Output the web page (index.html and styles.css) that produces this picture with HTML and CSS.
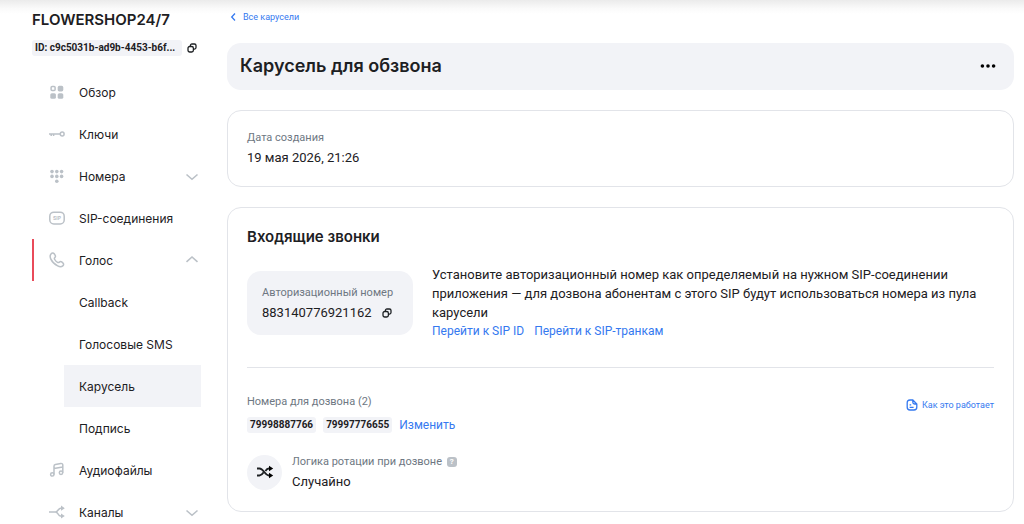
FILE: index.html
```html
<!DOCTYPE html>
<html lang="ru">
<head>
    <meta charset="UTF-8">
    <meta name="viewport" content="width=device-width, initial-scale=1.0">
    <title>Карусель для обзвона</title>
    <link rel="stylesheet" href="styles.css">
</head>
<body>
    <div class="top-shadow"></div>

    <div class="layout">
        <aside class="sidebar">
            <div class="project-name">FLOWERSHOP24/7</div>
            <div class="project-id">
                <span class="tag">ID: c9c5031b-ad9b-4453-b6f...</span>
                <button class="copy" type="button" aria-label="Копировать ID">
                    <svg width="10" height="10" viewBox="0 0 10 10"><path d="M3.4 3.2V2.6C3.4 1.500 4 1 5 1h2.400C8.500 1 9 1.600 9 2.600v2C9 5.600 8.500 6.100 7.500 6.100H6.700"/><rect x="1" y="3.5" width="5.4" height="5.5" rx="1.7"/></svg>
                </button>
            </div>

            <nav class="menu">
                <a class="item" href="#">
                    <svg class="icon" viewBox="0 0 16 16"><rect class="line" x="2.1" y="2.6" width="4" height="4" rx="1"/><rect class="fill" x="8.7" y="1.8" width="5.6" height="5.6" rx="1.6"/><rect class="fill" x="1.3" y="9.2" width="5.6" height="5.6" rx="1.6"/><rect class="fill" x="8.7" y="9.2" width="5.6" height="5.6" rx="1.6"/></svg>
                    <span>Обзор</span>
                </a>
                <a class="item" href="#">
                    <svg class="icon" viewBox="0 0 16 16"><path class="line" d="M0 8h11.500M2.200 8v2M4.600 8v2"/><ellipse class="line" cx="13.200" cy="8" rx="1.900" ry="2"/></svg>
                    <span>Ключи</span>
                </a>
                <a class="item" href="#">
                    <svg class="icon" viewBox="0 0 16 16"><g class="fill"><circle cx="3" cy="3.6" r="1.8"/><circle cx="7.8" cy="3.6" r="1.8"/><circle cx="12.6" cy="3.6" r="1.8"/><circle cx="3" cy="8.4" r="1.8"/><circle cx="7.8" cy="8.4" r="1.8"/><circle cx="12.6" cy="8.4" r="1.8"/><circle cx="7.8" cy="13.2" r="1.8"/></g></svg>
                    <span>Номера</span>
                    <svg class="chevron" viewBox="0 0 14 14"><path d="M1.500 5.500l5.500 4.800 5.500-4.800"/></svg>
                </a>
                <a class="item" href="#">
                    <svg class="icon" viewBox="0 0 16 16"><rect class="line" x=".8" y="2.2" width="14.4" height="11.8" rx="4"/><text class="icon-text" x="8" y="10">SIP</text></svg>
                    <span>SIP-соединения</span>
                </a>
                <a class="item open" href="#">
                    <svg class="icon" viewBox="0 0 16 16"><path class="line" d="M2 1.9C3 .8 4.400.7 5.200 1.800l1 1.500c.6 1 .2 1.800-.5 2.500-.5.5-.4 1 0 1.700.7 1.300 1.500 2.100 2.800 2.800.7.4 1.300.3 1.900-.2.7-.6 1.500-.8 2.300-.2l1.100.9c1.100.9 1.100 2.200 0 3.100-1.400 1.200-3.300 1-5.100 0C5.600 12.400 3.100 9.900 1.700 6.900 1 5.100.8 3.300 2 1.900z"/></svg>
                    <span>Голос</span>
                    <svg class="chevron" viewBox="0 0 14 14"><path d="M1.500 8.800L7 4l5.500 4.800"/></svg>
                </a>
                <a class="item sub" href="#">Callback</a>
                <a class="item sub" href="#">Голосовые SMS</a>
                <a class="item sub active" href="#">Карусель</a>
                <a class="item sub" href="#">Подпись</a>
                <a class="item" href="#">
                    <svg class="icon" viewBox="0 0 16 16"><circle class="line" cx="3.300" cy="12.400" r="1.700"/><circle class="line" cx="12" cy="10.800" r="1.700"/><path class="line" d="M5 12.400V4.200c0-1 .5-1.600 1.400-1.800l5.400-.9c1.200-.2 2 .4 2 1.500v7.800M5 6.400l8.700-1.500"/></svg>
                    <span>Аудиофайлы</span>
                </a>
                <a class="item" href="#">
                    <svg class="icon" viewBox="0 0 16 16"><path class="line" d="M0 8h7M13 4.200h-1.400C9.300 4.200 9 8 6.500 8c2.500 0 2.800 4 4.900 4H13"/><path class="fill" d="M12 1.600L15.800 4.200 12 6.800zM12 9.400l3.800 2.600-3.800 2.600z"/></svg>
                    <span>Каналы</span>
                    <svg class="chevron" viewBox="0 0 14 14"><path d="M1.500 5.500l5.500 4.800 5.500-4.800"/></svg>
                </a>
            </nav>
        </aside>

        <main class="content">
            <a class="back" href="#">
                <svg width="8" height="10" viewBox="0 0 8 10"><path d="M5 1.500L1.700 5 5 8.500"/></svg>
                Все карусели
            </a>

            <header class="title-bar">
                <h1>Карусель для обзвона</h1>
                <button class="more" type="button" aria-label="Ещё">
                    <svg width="16" height="4" viewBox="0 0 16 4"><circle cx="2.400" cy="2" r="1.800"/><circle cx="8" cy="2" r="1.800"/><circle cx="13.600" cy="2" r="1.800"/></svg>
                </button>
            </header>

            <section class="card">
                <div class="label">Дата создания</div>
                <div class="value">19 мая 2026, 21:26</div>
            </section>

            <section class="card calls">
                <h2>Входящие звонки</h2>
                <div class="auth">
                    <div class="auth-box">
                        <div class="label">Авторизационный номер</div>
                        <div class="auth-number">
                            <span class="value">883140776921162</span>
                            <button class="copy" type="button" aria-label="Копировать номер">
                                <svg width="10" height="10" viewBox="0 0 10 10"><path d="M3.4 3.2V2.6C3.4 1.500 4 1 5 1h2.400C8.500 1 9 1.600 9 2.600v2C9 5.600 8.500 6.100 7.500 6.100H6.700"/><rect x="1" y="3.5" width="5.4" height="5.5" rx="1.7"/></svg>
                            </button>
                        </div>
                    </div>
                    <div class="auth-text">
                        <p>Установите авторизационный номер как определяемый на нужном SIP-соединении приложения — для дозвона абонентам с этого SIP будут использоваться номера из пула карусели</p>
                        <div class="links">
                            <a href="#">Перейти к SIP ID</a>
                            <a href="#">Перейти к SIP-транкам</a>
                        </div>
                    </div>
                </div>

                <hr>

                <div class="numbers">
                    <div>
                        <div class="label">Номера для дозвона (2)</div>
                        <div class="tags">
                            <span class="tag">79998887766</span>
                            <span class="tag">79997776655</span>
                            <a href="#">Изменить</a>
                        </div>
                    </div>
                    <a class="how" href="#">
                        <svg width="12" height="12" viewBox="0 0 12 12"><path d="M6.800 1H4C2 1 1.200 1.900 1.200 3.800v4.400C1.200 10.100 2 11 4 11h4c2 0 2.800-.9 2.800-2.800V5zM6.800 1v2.200c0 1.200.6 1.800 1.800 1.800h2.200M3.600 5.800h1.600M3.600 8.300h4"/></svg>
                        Как это работает
                    </a>
                </div>

                <div class="rotation">
                    <div class="round">
                        <svg width="18" height="14" viewBox="0 0 18 14"><path class="dark-line" d="M1 3.500h2.500C7.500 3.500 9 10.500 12.800 10.500H14M1 10.500h2.500c1.800 0 3-1.300 4-2.900M9.400 6C10.300 4.600 11.300 3.500 12.800 3.500H14"/><path d="M13 .8L17.200 3.500 13 6.200zM13 7.800l4.200 2.700-4.200 2.700z"/></svg>
                    </div>
                    <div>
                        <div class="label">Логика ротации при дозвоне <span class="hint">?</span></div>
                        <div class="value">Случайно</div>
                    </div>
                </div>
            </section>
        </main>
    </div>
</body>
</html>
```
FILE: styles.css
```css
* {
    box-sizing: border-box;
}

body {
    margin: 0;
    height: 100vh;
    overflow: hidden;
    background-color: #fff;
    color: #1d2023;
    font-family: Roboto, 'Liberation Sans', sans-serif;
    font-size: 13px;
}

a {
    color: #3579f0;
    text-decoration: none;
}

button {
    display: flex;
    padding: 0;
    border: none;
    background: none;
    cursor: pointer;
}

h1, h2, p {
    margin: 0;
}

svg {
    flex: none;
}

.top-shadow {
    position: absolute;
    top: 0;
    left: 0;
    right: 0;
    height: 14px;
    background: linear-gradient(#ebebeb, #fafafa 60%, #fff);
    z-index: -1;
}

.layout {
    display: flex;
    gap: 26px;
    padding: 0 10px 0 32px;
}

h1, h2, .project-name, .item {
    font-family: Inter, 'Liberation Sans', sans-serif;
}

/* sidebar */

.sidebar {
    flex: none;
    width: 169px;
}

.project-name {
    margin-top: 10px;
    font-size: 15px;
    font-weight: 600;
    line-height: 20px;
    white-space: nowrap;
}

.project-id {
    display: flex;
    align-items: center;
    gap: 5px;
    margin-top: 10px;
}

.project-id .tag {
    width: 150px;
}

.tag {
    padding: 0 3px;
    border-radius: 3px;
    background-color: #f2f3f7;
    font-size: 10px;
    font-weight: 700;
    line-height: 16px;
    white-space: nowrap;
}

.copy svg {
    fill: none;
    stroke: #1d2023;
    stroke-width: 1.3;
}

.menu {
    margin-top: 15px;
}

.item {
    display: flex;
    align-items: center;
    height: 42px;
    padding: 0 2px 0 17px;
    color: #1d2023;
    font-size: 12px;
}

.item.open {
    padding-left: 15px;
    border-left: 2px solid #e94b5a;
}

.item.sub {
    margin-left: 32px;
    padding-left: 15px;
}

.item.active {
    background-color: #f2f3f7;
}

.icon {
    width: 16px;
    height: 16px;
    margin-right: 14px;
}

.line {
    fill: none;
    stroke: #bbc1c7;
    stroke-width: 1.5;
}

.fill {
    fill: #bbc1c7;
}

.icon-text {
    fill: #bbc1c7;
    font-size: 5px;
    font-weight: 700;
    text-anchor: middle;
}

.chevron {
    width: 14px;
    height: 14px;
    margin-left: auto;
    fill: none;
    stroke: #bbc1c7;
    stroke-width: 1.6;
}

/* content */

.content {
    flex: 1;
    min-width: 0;
}

.back {
    display: flex;
    align-items: center;
    gap: 5px;
    margin: 9px 0 18px 3px;
    font-size: 9px;
    line-height: 16px;
}

.back svg, .how svg {
    fill: none;
    stroke: #3579f0;
    stroke-width: 1.3;
}

.title-bar {
    display: flex;
    align-items: center;
    justify-content: space-between;
    height: 47px;
    padding: 0 18px 2px 13px;
    border-radius: 14px;
    background-color: #f2f3f7;
}

h1, h2 {
    font-weight: 600;
}

h1 {
    font-size: 18px;
}

.card {
    margin-top: 20px;
    padding: 17px 19px 18px;
    border: 1px solid #e2e4e9;
    border-radius: 14px;
}

.label {
    color: #6e7782;
    font-size: 11px;
    line-height: 20px;
}

.value {
    font-size: 13px;
    line-height: 20px;
}

h2 {
    font-size: 15px;
    line-height: 24px;
}

.auth {
    display: flex;
    gap: 19px;
    margin-top: 16px;
}

.auth-box {
    flex: none;
    align-self: center;
    width: 166px;
    padding: 12px 15px;
    border-radius: 14px;
    background-color: #f2f3f7;
}

.auth-number {
    display: flex;
    align-items: center;
    gap: 10px;
}

.auth-text {
    max-width: 560px;
    line-height: 19px;
}

.links {
    display: flex;
    gap: 10px;
    font-size: 12px;
}

hr {
    height: 1px;
    margin: 26px 0 24px;
    border: none;
    background-color: #e2e4e9;
}

.numbers {
    display: flex;
    justify-content: space-between;
}

.tags {
    display: flex;
    align-items: center;
    gap: 7px;
    margin-top: 3px;
    font-size: 12px;
    line-height: 20px;
}

.how {
    display: flex;
    align-items: center;
    align-self: flex-start;
    gap: 4px;
    margin-top: 7px;
    font-size: 9px;
}

.rotation {
    display: flex;
    align-items: center;
    gap: 10px;
    margin: 17px 0 1px;
}

.round {
    display: flex;
    align-items: center;
    justify-content: center;
    width: 35px;
    height: 35px;
    border-radius: 50%;
    background-color: #f2f3f7;
}

.dark-line {
    fill: none;
    stroke: #1d2023;
    stroke-width: 1.8;
}

.hint {
    display: inline-block;
    width: 10px;
    margin-left: 2px;
    border-radius: 3px;
    background-color: #bbc1c7;
    color: #fff;
    font-size: 8px;
    font-weight: 700;
    line-height: 10px;
    text-align: center;
    vertical-align: middle;
}
```
